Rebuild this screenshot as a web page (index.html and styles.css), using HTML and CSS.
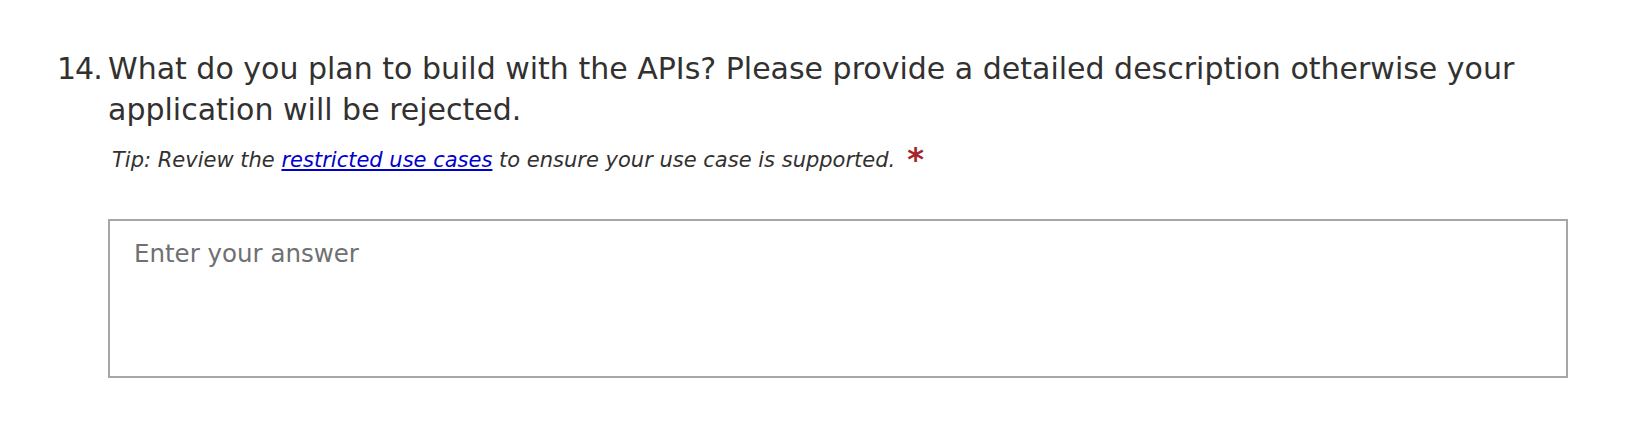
FILE: index.html
```html
<!DOCTYPE html>
<html lang="en">
<head>
<meta charset="utf-8">
<title>Question 14</title>
<link rel="stylesheet" href="styles.css">
</head>
<body>
<div class="question">
  <div class="q-head">
    <span class="q-num">14.</span>
    <div class="q-body">
      <div class="q-title">What do you plan to build with the APIs? Please provide a detailed description otherwise your application will be rejected.</div>
      <div class="q-sub"><span class="tip">Tip: Review the <a href="#" class="tip-link">restricted use cases</a> to ensure your use case is supported.</span><span class="required">*</span></div>
      <textarea class="answer" placeholder="Enter your answer"></textarea>
    </div>
  </div>
</div>
</body>
</html>
```

FILE: styles.css
```css
html, body {
  margin: 0;
  padding: 0;
  background: #ffffff;
}

body {
  font-family: "DejaVu Sans", sans-serif;
  color: #323130;
}

.question {
  padding: 48px 73px 0 57px;
}

.q-head {
  display: flex;
  align-items: flex-start;
}

.q-num {
  width: 51px;
  flex: none;
  font-size: 30px;
  line-height: 41px;
  letter-spacing: -1px;
}

.q-body {
  flex: 1;
  display: flex;
  flex-direction: column;
}

.q-title {
  font-size: 30px;
  line-height: 41px;
}

.q-sub {
  display: flex;
  align-items: flex-start;
  padding-left: 4px;
  margin-top: 15px;
}

.tip {
  font-style: italic;
  font-size: 21px;
  line-height: 30px;
}

.tip-link {
  color: #0000cc;
  text-decoration: underline;
}

.required {
  color: #a4262c;
  font-size: 32px;
  font-weight: bold;
  line-height: 30px;
  margin-left: 12px;
  margin-top: -1px;
}

.answer {
  margin-top: 44px;
  box-sizing: border-box;
  width: 100%;
  height: 159px;
  border: 2px solid #a6a6a6;
  border-radius: 0;
  padding: 17px 24px 16px;
  font-family: "DejaVu Sans", sans-serif;
  font-size: 24.5px;
  line-height: 32px;
  color: #323130;
  resize: none;
  outline: none;
  background: #ffffff;
}

.answer::placeholder {
  color: #707070;
  opacity: 1;
}
```
